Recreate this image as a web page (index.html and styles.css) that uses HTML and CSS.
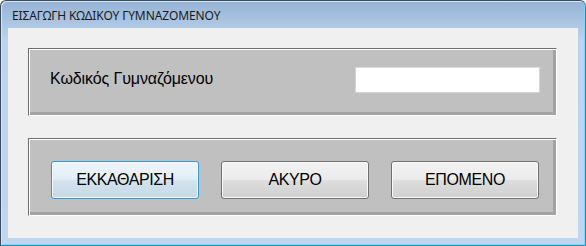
FILE: index.html
```html
<!DOCTYPE html>
<html>
<head>
<meta charset="utf-8">
<link rel="stylesheet" href="styles.css">
</head>
<body>
<div class="window">
  <div class="titlebar"><span class="title">ΕΙΣΑΓΩΓΗ ΚΩΔΙΚΟΥ ΓΥΜΝΑΖΟΜΕΝΟΥ</span></div>
  <div class="client">
    <div class="panel panel-code">
      <span class="label">Κωδικός Γυμναζόμενου</span>
      <input class="textbox" type="text">
    </div>
    <div class="panel panel-buttons">
      <button class="btn btn-focus">ΕΚΚΑΘΑΡΙΣΗ</button>
      <button class="btn">ΑΚΥΡΟ</button>
      <button class="btn">ΕΠΟΜΕΝΟ</button>
    </div>
  </div>
</div>
</body>
</html>
```
FILE: styles.css
```css
html, body {
  margin: 0;
  padding: 0;
  background: #ffffff;
}
.window {
  box-sizing: border-box;
  width: 586px;
  height: 246px;
  border: 1px solid #3a4a5c;
  border-bottom-color: #2a8fb8;
  border-right-color: #2a8fb8;
  border-radius: 6px 6px 0 0;
  background: linear-gradient(to bottom, #96b3d5 0px, #b1cae6 28px, #bcd4ec 40px, #bfd6ee 100%);
  box-shadow: inset 1px 1px 0 #d8e6f4, inset -1px -1px 0 #7fd6ee;
  padding: 0 7px 7px 7px;
  display: flex;
  flex-direction: column;
}
.titlebar {
  height: 27px;
  display: flex;
  align-items: center;
  padding-left: 4px;
  padding-top: 2px;
  box-sizing: border-box;
}
.title {
  font-family: "Noto Sans", "Open Sans", sans-serif;
  font-size: 12px;
  color: #1a1a1a;
  letter-spacing: -0.1px;
}
.client {
  width: 570px;
  height: 210px;
  background: #f0f0f0;
  box-sizing: border-box;
  padding: 20px 21px 0 20px;
  display: flex;
  flex-direction: column;
  gap: 22px;
}
.panel {
  box-sizing: border-box;
  width: 529px;
  background: #c0c0c0;
  border-top: 1px solid #6e6e6e;
  border-left: 1px solid #6e6e6e;
  border-right: 1px solid #ffffff;
  border-bottom: 1px solid #ffffff;
  box-shadow: inset 1px 1px 0 #ffffff, inset -3px -3px 0 #a3a3a3;
  display: flex;
  align-items: flex-start;
}
.panel-code {
  height: 68px;
  padding: 0 0 0 21px;
}
.label {
  font-family: "Liberation Sans", Arial, sans-serif;
  font-size: 16px;
  color: #000;
  margin-top: 21px;
  width: 305px;
  letter-spacing: -0.1px;
}
.textbox {
  box-sizing: border-box;
  width: 185px;
  height: 26px;
  margin-top: 18px;
  border: 1px solid #d4d4d4;
  border-top-color: #dcdcdc;
  background: #ffffff;
  outline: none;
  padding: 0;
}
.panel-buttons {
  height: 78px;
  padding: 22px 0 0 22px;
  gap: 22px;
}
.btn {
  box-sizing: border-box;
  width: 148px;
  height: 38px;
  border: 1px solid #707070;
  border-radius: 3px;
  background: linear-gradient(to bottom, #f2f2f2 0%, #ebebeb 48%, #dddddd 52%, #cfcfcf 100%);
  box-shadow: inset 0 0 0 1px #fbfbfb;
  font-family: "Liberation Sans", Arial, sans-serif;
  font-size: 16px;
  letter-spacing: -0.4px;
  color: #000;
  padding: 0;
}
.btn-focus {
  border-color: #3399dd;
  background: linear-gradient(to bottom, #eef5fa 0%, #e2eef6 48%, #d3e3ee 52%, #c6d9e5 100%);
  box-shadow: inset 0 0 0 1px #f4fafd;
}
```
